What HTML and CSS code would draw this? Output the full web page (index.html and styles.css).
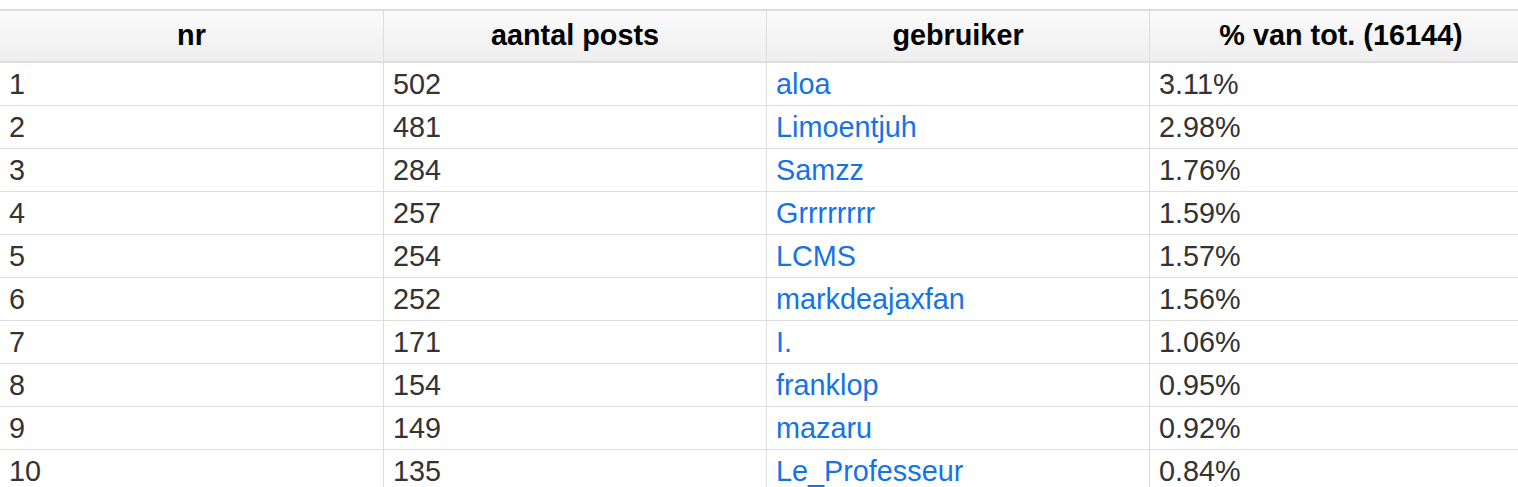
FILE: index.html
```html
<!DOCTYPE html>
<html lang="nl">
<head>
<meta charset="utf-8">
<title>Posts per gebruiker</title>
<link rel="stylesheet" href="styles.css">
</head>
<body>
<div class="page">
<table class="stats">
  <thead>
    <tr><th>nr</th><th>aantal posts</th><th>gebruiker</th><th>% van tot. (16144)</th></tr>
  </thead>
  <tbody>
    <tr><td>1</td><td>502</td><td><a href="#">aloa</a></td><td>3.11%</td></tr>
    <tr><td>2</td><td>481</td><td><a href="#">Limoentjuh</a></td><td>2.98%</td></tr>
    <tr><td>3</td><td>284</td><td><a href="#">Samzz</a></td><td>1.76%</td></tr>
    <tr><td>4</td><td>257</td><td><a href="#">Grrrrrrrr</a></td><td>1.59%</td></tr>
    <tr><td>5</td><td>254</td><td><a href="#">LCMS</a></td><td>1.57%</td></tr>
    <tr><td>6</td><td>252</td><td><a href="#">markdeajaxfan</a></td><td>1.56%</td></tr>
    <tr><td>7</td><td>171</td><td><a href="#">I.</a></td><td>1.06%</td></tr>
    <tr><td>8</td><td>154</td><td><a href="#">franklop</a></td><td>0.95%</td></tr>
    <tr><td>9</td><td>149</td><td><a href="#">mazaru</a></td><td>0.92%</td></tr>
    <tr><td>10</td><td>135</td><td><a href="#">Le_Professeur</a></td><td>0.84%</td></tr>
  </tbody>
</table>
</div>
</body>
</html>
```
FILE: styles.css
```css
html, body {
  margin: 0;
  padding: 0;
  background: #fff;
  overflow: hidden;
}
.page {
  padding-top: 9px;
  font-family: "Liberation Sans", Arial, sans-serif;
  font-size: 28.8px;
  color: #333;
}
.stats {
  width: 1532px;
  table-layout: fixed;
  border-collapse: separate;
  border-spacing: 0;
}
.stats th,
.stats td {
  line-height: 33px;
  text-align: left;
  white-space: nowrap;
  overflow: hidden;
}
.stats th {
  padding: 8px 9px 9px;
  text-align: center;
  font-weight: bold;
  color: #000;
  background: linear-gradient(#fafafa, #efefef);
  border-top: 2px solid #dddddd;
  border-bottom: 2px solid #dddddd;
}
.stats td {
  padding: 5px 9px 4px;
  border-bottom: 1px solid #dddddd;
}
.stats th + th,
.stats td + td {
  border-left: 1px solid #dddddd;
}
.stats a {
  color: #1473e6;
  text-decoration: none;
}
```
